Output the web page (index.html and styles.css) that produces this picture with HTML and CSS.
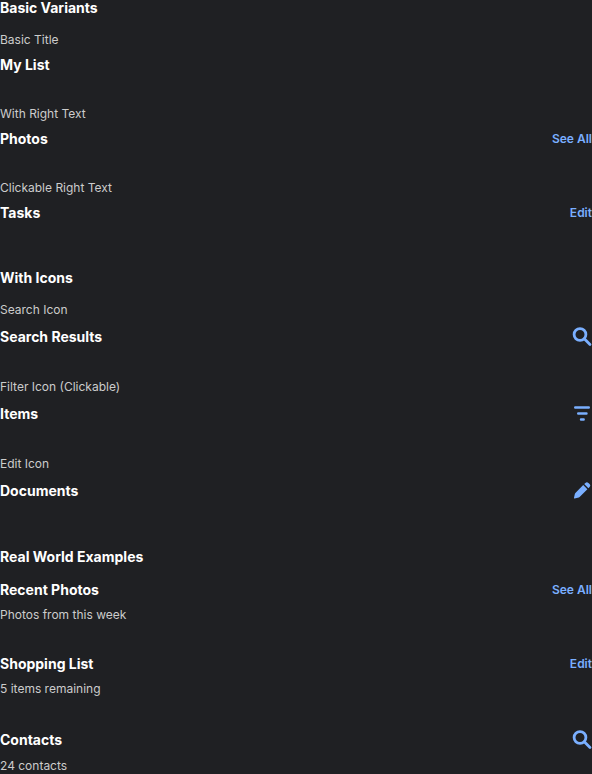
FILE: index.html
```html
<!DOCTYPE html>
<html lang="en">
<head>
<meta charset="utf-8">
<title>List Titles</title>
<link rel="stylesheet" href="styles.css">
</head>
<body>
<main class="page">
  <section class="section">
    <h2 class="heading">Basic Variants</h2>
    <div class="variant">
      <p class="caption">Basic Title</p>
      <div class="title-row"><h3 class="title">My List</h3></div>
    </div>
    <div class="variant">
      <p class="caption">With Right Text</p>
      <div class="title-row"><h3 class="title">Photos</h3><span class="action">See All</span></div>
    </div>
    <div class="variant">
      <p class="caption">Clickable Right Text</p>
      <div class="title-row"><h3 class="title">Tasks</h3><button class="action" type="button">Edit</button></div>
    </div>
  </section>
  <section class="section">
    <h2 class="heading">With Icons</h2>
    <div class="variant">
      <p class="caption">Search Icon</p>
      <div class="title-row"><h3 class="title">Search Results</h3>
        <svg class="icon" viewBox="0 0 20 20" aria-hidden="true"><circle class="line search" cx="8" cy="8" r="5.900"/><path class="line search" d="M12.300 12.300 18 18"/></svg>
      </div>
    </div>
    <div class="variant">
      <p class="caption">Filter Icon (Clickable)</p>
      <div class="title-row"><h3 class="title">Items</h3>
        <button class="icon-button" type="button" aria-label="Filter"><svg class="icon" viewBox="0 0 20 20" aria-hidden="true"><path class="line" d="M3.200 4h13.600M6.200 10h8.300M9 16h2.700"/></svg></button>
      </div>
    </div>
    <div class="variant">
      <p class="caption">Edit Icon</p>
      <div class="title-row"><h3 class="title">Documents</h3>
        <svg class="icon" viewBox="0 0 20 20" aria-hidden="true"><path class="fill" d="M2 17.300 2.900 13.200Q3 12.800 3.400 12.400L11.200 4.600 15.400 8.800 7.600 16.600Q7.200 17 6.800 17.100L2.700 18Q1.800 18.200 2 17.300ZM12.200 3.600 13.400 2.400Q14.900 .9 16.400 2.400L17.600 3.600Q19.100 5.100 17.600 6.600L16.400 7.800Z"/></svg>
      </div>
    </div>
  </section>
  <section class="section">
    <h2 class="heading">Real World Examples</h2>
    <div class="variant">
      <div class="title-row"><h3 class="title">Recent Photos</h3><button class="action" type="button">See All</button></div>
      <p class="caption">Photos from this week</p>
    </div>
    <div class="variant">
      <div class="title-row"><h3 class="title">Shopping List</h3><button class="action" type="button">Edit</button></div>
      <p class="caption">5 items remaining</p>
    </div>
    <div class="variant">
      <div class="title-row"><h3 class="title">Contacts</h3>
        <button class="icon-button" type="button" aria-label="Search"><svg class="icon" viewBox="0 0 20 20" aria-hidden="true"><circle class="line search" cx="8" cy="8" r="5.900"/><path class="line search" d="M12.300 12.300 18 18"/></svg></button>
      </div>
      <p class="caption">24 contacts</p>
    </div>
  </section>
</main>
</body>
</html>
```

FILE: styles.css
```css
* { box-sizing: border-box; margin: 0; padding: 0; }
body { background: #1f2023; color: #fff; font-family: Inter, sans-serif; }
.page { display: flex; flex-direction: column; gap: 16px; }
.section { display: flex; flex-direction: column; }
.heading { font-size: 14px; line-height: 16px; font-weight: 700; margin-bottom: 16px; }
.variant { display: flex; flex-direction: column; gap: 8px; padding-bottom: 32px; }
.caption { font-size: 12px; line-height: 16px; color: #ccc; }
.title-row { display: flex; align-items: center; justify-content: space-between; }
.title { font-size: 14px; line-height: 18px; font-weight: 700; }
.action { font: 600 12px/18px Inter, sans-serif; color: #7aafff; border: 0; background: none; }
.icon-button { display: block; border: 0; background: none; }
.icon { display: block; width: 20px; height: 21px; }
.line { fill: none; stroke: #7aafff; stroke-width: 2.4; stroke-linecap: round; }
.search { stroke-width: 2.8; }
.fill { fill: #7aafff; }
```
